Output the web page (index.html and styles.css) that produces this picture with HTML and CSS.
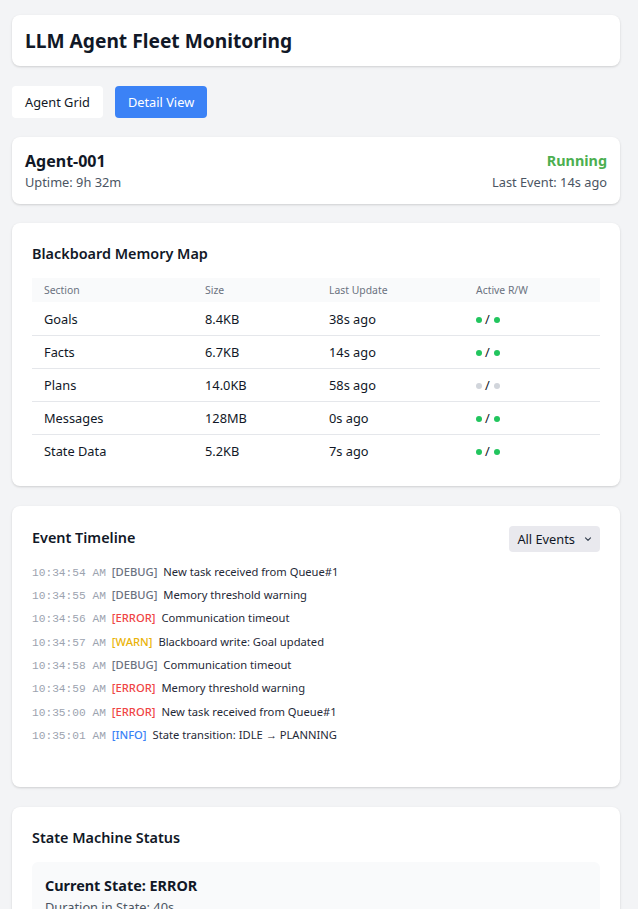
FILE: index.html
```html
<!DOCTYPE html>
<html lang="en">
<head>
<meta charset="utf-8">
<title>LLM Agent Fleet Monitoring</title>
<link rel="stylesheet" href="styles.css">
</head>
<body>
<div class="app">
  <header class="card header">
    <h1>LLM Agent Fleet Monitoring</h1>
  </header>

  <nav class="tabs">
    <button class="tab">Agent Grid</button>
    <button class="tab active">Detail View</button>
  </nav>

  <section class="card agent">
    <div class="agent-left">
      <div class="agent-name">Agent-001</div>
      <div class="muted">Uptime: 9h 32m</div>
    </div>
    <div class="agent-right">
      <div class="status">Running</div>
      <div class="muted">Last Event: 14s ago</div>
    </div>
  </section>

  <section class="card panel mem-panel">
    <h2 class="panel-title">Blackboard Memory Map</h2>
    <table class="mem">
      <colgroup>
        <col class="c1"><col class="c2"><col class="c3"><col class="c4">
      </colgroup>
      <thead>
        <tr><th>Section</th><th>Size</th><th>Last Update</th><th>Active R/W</th></tr>
      </thead>
      <tbody>
        <tr><td>Goals</td><td>8.4KB</td><td>38s ago</td><td><span class="rw"><span class="dot on"></span><span class="sl">/</span><span class="dot on"></span></span></td></tr>
        <tr><td>Facts</td><td>6.7KB</td><td>14s ago</td><td><span class="rw"><span class="dot on"></span><span class="sl">/</span><span class="dot on"></span></span></td></tr>
        <tr><td>Plans</td><td>14.0KB</td><td>58s ago</td><td><span class="rw"><span class="dot off"></span><span class="sl">/</span><span class="dot off"></span></span></td></tr>
        <tr><td>Messages</td><td>128MB</td><td>0s ago</td><td><span class="rw"><span class="dot on"></span><span class="sl">/</span><span class="dot on"></span></span></td></tr>
        <tr><td>State Data</td><td>5.2KB</td><td>7s ago</td><td><span class="rw"><span class="dot on"></span><span class="sl">/</span><span class="dot on"></span></span></td></tr>
      </tbody>
    </table>
  </section>

  <section class="card panel">
    <div class="panel-head">
      <h2 class="panel-title">Event Timeline</h2>
      <div class="select">
        <span>All Events</span>
        <svg width="8" height="6" viewBox="0 0 8 6" aria-hidden="true"><path d="M1.5 1.8 L4 4.3 L6.5 1.8" fill="none" stroke="#374151" stroke-width="1.2" stroke-linecap="round" stroke-linejoin="round"/></svg>
      </div>
    </div>
    <div class="log">
      <div class="entry"><span class="time">10:34:54 AM</span><span class="tag debug">[DEBUG]</span><span class="msg">New task received from Queue#1</span></div>
      <div class="entry"><span class="time">10:34:55 AM</span><span class="tag debug">[DEBUG]</span><span class="msg">Memory threshold warning</span></div>
      <div class="entry"><span class="time">10:34:56 AM</span><span class="tag error">[ERROR]</span><span class="msg">Communication timeout</span></div>
      <div class="entry"><span class="time">10:34:57 AM</span><span class="tag warn">[WARN]</span><span class="msg">Blackboard write: Goal updated</span></div>
      <div class="entry"><span class="time">10:34:58 AM</span><span class="tag debug">[DEBUG]</span><span class="msg">Communication timeout</span></div>
      <div class="entry"><span class="time">10:34:59 AM</span><span class="tag error">[ERROR]</span><span class="msg">Memory threshold warning</span></div>
      <div class="entry"><span class="time">10:35:00 AM</span><span class="tag error">[ERROR]</span><span class="msg">New task received from Queue#1</span></div>
      <div class="entry"><span class="time">10:35:01 AM</span><span class="tag info">[INFO]</span><span class="msg">State transition: IDLE → PLANNING</span></div>
    </div>
  </section>

  <section class="card panel">
    <h2 class="panel-title">State Machine Status</h2>
    <div class="state-box">
      <div class="state-current">Current State: ERROR</div>
      <div class="muted state-line">Duration in State: 40s</div>
      <div class="muted">Previous State: EXECUTING</div>
    </div>
    <div class="flow">
      <span class="chip">IDLE</span><span class="arrow">→</span>
      <span class="chip">PLANNING</span><span class="arrow">→</span>
      <span class="chip">EXECUTING</span><span class="arrow">→</span>
      <span class="chip chip-error">ERROR</span>
    </div>
  </section>

  <section class="card panel">
    <h2 class="panel-title">Resource Usage</h2>
    <div class="res">
      <div class="res-row"><span>Token Budget</span><span class="muted">72%</span></div>
      <div class="bar"><div class="fill" style="width:72%"></div></div>
      <div class="res-row"><span>Context Window</span><span class="muted">48%</span></div>
      <div class="bar"><div class="fill" style="width:48%"></div></div>
      <div class="res-row"><span>Queue Depth</span><span class="muted">15%</span></div>
      <div class="bar"><div class="fill" style="width:15%"></div></div>
    </div>
  </section>
</div>
</body>
</html>
```

FILE: styles.css
```css
* { box-sizing: border-box; }

html { background: #f3f4f6; }

body {
  margin: 0;
  background: #f3f4f6;
  font-family: "Noto Sans", "Open Sans", sans-serif;
  color: #111827;
}

.app {
  max-width: 632px;
  padding: 15px 12px 20px;
}

.card {
  background: #fff;
  border-radius: 8px;
  box-shadow: 0 1px 3px rgba(0, 0, 0, 0.1), 0 1px 2px rgba(0, 0, 0, 0.06);
}

.header {
  padding: 12px 13px;
  margin-bottom: 20px;
}

.header h1 {
  margin: 0;
  font-size: 19.2px;
  line-height: 27px;
  font-weight: 700;
}

.tabs {
  display: flex;
  gap: 12px;
  margin-bottom: 19px;
}

.tab {
  font-family: inherit;
  font-size: 12.8px;
  line-height: 20px;
  padding: 6px 13px;
  border: none;
  border-radius: 4px;
  background: #fff;
  color: #111827;
}

.tab.active {
  background: #3b82f6;
  color: #fff;
}

.agent {
  display: flex;
  justify-content: space-between;
  padding: 12px 13px 13px;
  margin-bottom: 19px;
}

.agent-name {
  font-size: 16px;
  line-height: 24px;
  font-weight: 700;
}

.agent-right { text-align: right; }

.status {
  font-size: 14.4px;
  line-height: 24px;
  font-weight: 700;
  color: #4caf50;
}

.muted {
  font-size: 12.8px;
  line-height: 18px;
  color: #4b5563;
}

.panel {
  padding: 20px;
  margin-bottom: 20px;
}

.mem-panel { padding-bottom: 18px; }

.panel-title {
  margin: 0 0 13px;
  font-size: 14.4px;
  line-height: 22px;
  font-weight: 600;
}

.mem {
  width: 100%;
  border-collapse: collapse;
  table-layout: fixed;
  font-size: 12.8px;
}

.mem .c1 { width: 161px; }
.mem .c2 { width: 124px; }
.mem .c3 { width: 147px; }
.mem .c4 { width: 136px; }

.mem th {
  background: #f9fafb;
  font-size: 10.4px;
  font-weight: 400;
  color: #6b7280;
  text-align: left;
  padding: 5px 12px;
  line-height: 14px;
  height: 24px;
}

.mem td {
  padding: 6px 12px;
  height: 33px;
  line-height: 20px;
  border-bottom: 1px solid #e5e7eb;
  color: #111827;
}

.mem tbody tr:first-child td { padding-top: 7px; }

.mem tbody tr:last-child td { border-bottom: none; }

.rw {
  display: flex;
  align-items: center;
  height: 20px;
}

.dot {
  display: block;
  width: 6px;
  height: 6px;
  border-radius: 50%;
  margin-top: 1px;
}

.dot.on { background: #22c55e; }
.dot.off { background: #d1d5db; }

.sl {
  margin: 0 4px 0 3px;
  font-size: 12.8px;
  line-height: 20px;
}

.panel-head {
  display: flex;
  justify-content: space-between;
  align-items: center;
}

.panel-head .panel-title { margin: 0 0 1px; }

.select {
  display: flex;
  align-items: center;
  gap: 9px;
  height: 26px;
  padding: 0 8px;
  background: #e9e9ee;
  border-radius: 4px;
  font-size: 12.8px;
  color: #111827;
}

.log {
  margin-top: 8px;
  height: 207px;
}

.entry {
  display: flex;
  align-items: baseline;
  height: 23.4px;
  padding: 3px 0;
  line-height: 17.4px;
  font-size: 11.2px;
  white-space: nowrap;
}

.time {
  font-family: "Liberation Mono", monospace;
  font-size: 11.2px;
  color: #9ca3af;
  margin-right: 6px;
}

.tag {
  font-weight: 500;
  margin-right: 6px;
}

.tag.debug { color: #6b7280; }
.tag.error { color: #ef4444; }
.tag.warn { color: #eab308; }
.tag.info { color: #3b82f6; }

.msg { color: #1f2937; }

.state-box {
  background: #f9fafb;
  border-radius: 6px;
  padding: 14px 13px 13px;
}

.state-current {
  font-size: 14.4px;
  line-height: 20px;
  font-weight: 700;
}

.state-line { margin-top: 2px; }

.flow {
  display: flex;
  align-items: center;
  gap: 8px;
  margin-top: 16px;
  font-size: 11.2px;
}

.chip {
  padding: 4px 10px;
  border-radius: 12px;
  background: #e5e7eb;
  color: #374151;
}

.chip-error {
  background: #fee2e2;
  color: #b91c1c;
}

.arrow { color: #9ca3af; }

.res {
  display: flex;
  flex-direction: column;
  gap: 8px;
  font-size: 12.8px;
}

.res-row {
  display: flex;
  justify-content: space-between;
}

.bar {
  height: 8px;
  background: #e5e7eb;
  border-radius: 4px;
  overflow: hidden;
  margin-bottom: 6px;
}

.fill {
  height: 100%;
  background: #3b82f6;
}
```
